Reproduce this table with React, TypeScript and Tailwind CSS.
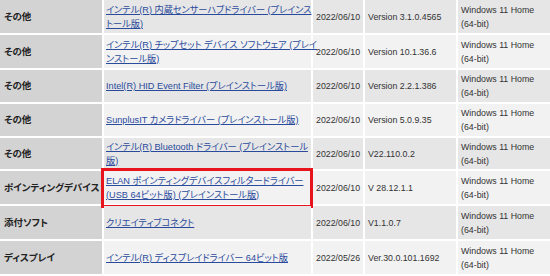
const rows = [
  {
    cat: 'その他',
    name: ['インテル(R) 内蔵センサーハブドライバー (プレインス', 'トール版)'],
    date: '2022/06/10',
    ver: 'Version 3.1.0.4565',
    h: 'h-[33px]',
    bg: 'bg-[#e6e6e6]',
  },
  {
    cat: 'その他',
    name: ['インテル(R) チップセット デバイス ソフトウェア (プレイ', 'ンストール版)'],
    date: '2022/06/10',
    ver: 'Version 10.1.36.6',
    h: 'h-[33px]',
    bg: 'bg-[#f2f2f2]',
  },
  {
    cat: 'その他',
    name: ['Intel(R) HID Event Filter (プレインストール版)'],
    date: '2022/06/10',
    ver: 'Version 2.2.1.386',
    h: 'h-[32px]',
    bg: 'bg-[#e6e6e6]',
  },
  {
    cat: 'その他',
    name: ['SunplusIT カメラドライバー (プレインストール版)'],
    date: '2022/06/10',
    ver: 'Version 5.0.9.35',
    h: 'h-[32px]',
    bg: 'bg-[#f2f2f2]',
  },
  {
    cat: 'その他',
    name: ['インテル(R) Bluetooth ドライバー (プレインストール', '版)'],
    date: '2022/06/10',
    ver: 'V22.110.0.2',
    h: 'h-[31px]',
    bg: 'bg-[#e6e6e6]',
  },
  {
    cat: 'ポインティングデバイス',
    name: ['ELAN ポインティングデバイスフィルタードライバー', '(USB 64ビット版) (プレインストール版)'],
    date: '2022/06/10',
    ver: 'V 28.12.1.1',
    h: 'h-[33px]',
    bg: 'bg-[#f2f2f2]',
    marked: true,
  },
  {
    cat: '添付ソフト',
    name: ['クリエイティブコネクト'],
    date: '2022/06/10',
    ver: 'V1.1.0.7',
    h: 'h-[33px]',
    bg: 'bg-[#e6e6e6]',
  },
  {
    cat: 'ディスプレイ',
    name: ['インテル(R) ディスプレイドライバー 64ビット版'],
    date: '2022/05/26',
    ver: 'Ver.30.0.101.1692',
    h: 'h-[33px]',
    bg: 'bg-[#f2f2f2]',
  },
]

const App = () => {
  return (
    <div className="w-[550px] h-[276px] overflow-hidden bg-white font-['Liberation_Sans','Noto_Sans_CJK_JP',sans-serif] text-[8.8px] leading-[14px] text-[#333] [font-feature-settings:'palt']">
      <div className="flex flex-col gap-[2px]">
        {rows.map((r, i) => (
          <div key={i} className={`grid grid-cols-[102px_207px_50px_91px_1fr] gap-[2px] ${r.h}`}>
            <div className="flex items-center bg-[#d3d3d3] pl-[4px] font-bold text-[9.5px] text-[#222] whitespace-nowrap">
              {r.cat}
            </div>
            <div className={`relative flex flex-col justify-center pl-[2px] ${r.bg}`}>
              {r.name.map((line, j) => (
                <a key={j} href="#" className="text-[#2a4a9c] underline whitespace-nowrap text-[9.2px]">
                  {line}
                </a>
              ))}
              {r.marked && (
                <div className="absolute -left-[3px] -right-[2px] -top-[3px] -bottom-[4px] border-[3px] border-[#e8141c]" />
              )}
            </div>
            <div className={`flex items-center pl-[3px] whitespace-nowrap ${r.bg}`}>{r.date}</div>
            <div className={`flex items-center pl-[3px] whitespace-nowrap ${r.bg}`}>{r.ver}</div>
            <div className={`flex flex-col justify-center pl-[3px] whitespace-nowrap ${r.bg}`}>
              <span>Windows 11 Home</span>
              <span>(64-bit)</span>
            </div>
          </div>
        ))}
        <div className="grid grid-cols-[102px_207px_50px_91px_1fr] gap-[2px] h-[33px]">
          <div className="bg-[#d3d3d3]" />
          <div className="bg-[#e6e6e6]" />
          <div className="bg-[#e6e6e6]" />
          <div className="bg-[#e6e6e6]" />
          <div className="bg-[#e6e6e6]" />
        </div>
      </div>
    </div>
  )
}

export default App
